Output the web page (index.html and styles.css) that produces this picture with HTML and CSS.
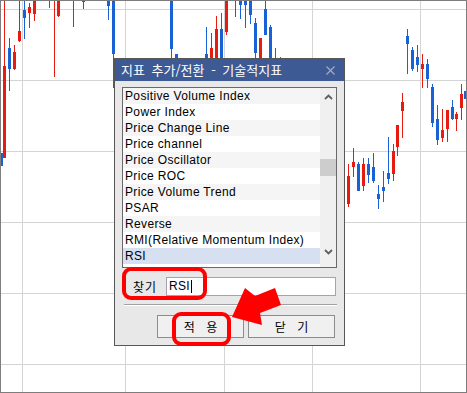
FILE: index.html
```html
<!DOCTYPE html>
<html lang="ko">
<head>
<meta charset="utf-8">
<title>지표 추가/전환</title>
<link rel="stylesheet" href="styles.css">
</head>
<body>
<div class="frame">
  <svg class="chart" width="467" height="393" viewBox="0 0 467 393">
    <g class="grid">
      <rect x="1" y="9" width="465" height="1"/>
      <rect x="1" y="80" width="465" height="1"/>
      <rect x="1" y="151" width="465" height="1"/>
      <rect x="1" y="222" width="465" height="1"/>
      <rect x="1" y="293" width="465" height="1"/>
      <rect x="1" y="364" width="465" height="1"/>
      <rect x="22" y="1" width="1" height="391"/>
      <rect x="125" y="1" width="1" height="391"/>
      <rect x="224" y="1" width="1" height="391"/>
      <rect x="312" y="1" width="1" height="391"/>
      <rect x="420" y="1" width="1" height="391"/>
    </g>
    <g class="up">
      <rect x="4" y="0" width="1" height="158"/><rect x="3" y="66" width="3" height="92"/>
      <rect x="14" y="45" width="1" height="25"/><rect x="13" y="52" width="3" height="17"/>
      <rect x="19" y="0" width="1" height="42"/><rect x="18" y="31" width="3" height="10"/>
      <rect x="29" y="3" width="1" height="25"/><rect x="28" y="7" width="3" height="6"/>
      <rect x="34" y="0" width="1" height="21"/><rect x="33" y="0" width="3" height="14"/>
      <rect x="54" y="0" width="1" height="77"/>
      <rect x="58" y="0" width="1" height="17"/><rect x="57" y="0" width="3" height="16"/>
      <rect x="73" y="0" width="1" height="27"/>
      <rect x="83" y="0" width="1" height="9"/><rect x="82" y="0" width="3" height="2"/>
      <rect x="211" y="33" width="1" height="27"/><rect x="210" y="48" width="3" height="12"/>
      <rect x="216" y="16" width="1" height="44"/><rect x="215" y="29" width="3" height="31"/>
      <rect x="226" y="0" width="1" height="35"/><rect x="225" y="0" width="3" height="32"/>
      <rect x="259" y="38" width="3" height="22"/>
      <rect x="348" y="164" width="1" height="43"/><rect x="347" y="176" width="3" height="28"/>
      <rect x="353" y="148" width="1" height="29"/><rect x="352" y="162" width="3" height="5"/>
      <rect x="363" y="158" width="1" height="33"/><rect x="362" y="164" width="3" height="22"/>
      <rect x="393" y="144" width="1" height="37"/><rect x="392" y="151" width="3" height="23"/>
      <rect x="397" y="125" width="1" height="31"/><rect x="396" y="125" width="3" height="22"/>
      <rect x="402" y="93" width="1" height="45"/><rect x="401" y="102" width="3" height="9"/>
      <rect x="422" y="54" width="1" height="34"/><rect x="421" y="64" width="3" height="5"/>
      <rect x="442" y="109" width="1" height="33"/><rect x="441" y="130" width="3" height="8"/>
      <rect x="447" y="110" width="1" height="32"/><rect x="446" y="110" width="3" height="19"/>
      <rect x="456" y="112" width="1" height="19"/><rect x="455" y="114" width="3" height="5"/>
      <rect x="461" y="84" width="1" height="36"/><rect x="460" y="94" width="3" height="14"/>
    </g>
    <g class="down">
      <rect x="1" y="153" width="2" height="13"/>
      <rect x="9" y="38" width="1" height="53"/><rect x="8" y="48" width="3" height="21"/>
      <rect x="24" y="0" width="1" height="39"/><rect x="23" y="10" width="3" height="8"/>
      <rect x="49" y="0" width="1" height="8"/>
      <rect x="108" y="0" width="1" height="20"/><rect x="107" y="0" width="3" height="6"/>
      <rect x="113" y="0" width="1" height="88"/><rect x="112" y="0" width="3" height="54"/>
      <rect x="171" y="0" width="1" height="60"/><rect x="170" y="0" width="3" height="49"/>
      <rect x="176" y="54" width="1" height="6"/><rect x="175" y="54" width="3" height="6"/>
      <rect x="206" y="27" width="1" height="33"/><rect x="205" y="54" width="3" height="6"/>
      <rect x="221" y="13" width="1" height="47"/><rect x="220" y="29" width="3" height="31"/>
      <rect x="235" y="0" width="1" height="17"/>
      <rect x="240" y="0" width="1" height="19"/><rect x="239" y="0" width="3" height="5"/>
      <rect x="245" y="0" width="1" height="28"/><rect x="244" y="0" width="3" height="5"/>
      <rect x="250" y="0" width="1" height="24"/><rect x="249" y="0" width="3" height="15"/>
      <rect x="255" y="18" width="1" height="42"/><rect x="254" y="23" width="3" height="30"/>
      <rect x="265" y="0" width="1" height="35"/><rect x="264" y="9" width="3" height="26"/>
      <rect x="270" y="25" width="1" height="35"/><rect x="269" y="27" width="3" height="33"/>
      <rect x="275" y="48" width="1" height="12"/>
      <rect x="280" y="57" width="1" height="3"/>
      <rect x="358" y="162" width="1" height="29"/><rect x="357" y="164" width="3" height="27"/>
      <rect x="368" y="158" width="1" height="25"/><rect x="367" y="164" width="3" height="11"/>
      <rect x="373" y="153" width="1" height="30"/><rect x="372" y="167" width="3" height="14"/>
      <rect x="378" y="185" width="1" height="24"/><rect x="377" y="194" width="3" height="5"/>
      <rect x="383" y="171" width="1" height="31"/><rect x="382" y="187" width="3" height="4"/>
      <rect x="388" y="137" width="1" height="47"/><rect x="387" y="173" width="3" height="6"/>
      <rect x="407" y="29" width="1" height="45"/><rect x="406" y="36" width="3" height="8"/>
      <rect x="412" y="47" width="1" height="24"/><rect x="411" y="50" width="3" height="19"/>
      <rect x="417" y="45" width="1" height="27"/><rect x="416" y="57" width="3" height="8"/>
      <rect x="427" y="59" width="1" height="29"/><rect x="426" y="64" width="3" height="15"/>
      <rect x="432" y="84" width="1" height="43"/><rect x="431" y="87" width="3" height="36"/>
      <rect x="437" y="105" width="1" height="40"/><rect x="436" y="119" width="3" height="21"/>
      <rect x="452" y="100" width="1" height="20"/><rect x="451" y="107" width="3" height="12"/>
      <rect x="464" y="91" width="2" height="8"/>
    </g>
    <rect class="border" x="0.5" y="0.5" width="466" height="392"/>
  </svg>

  <div class="dialog">
    <div class="titlebar">
      <span class="title">지표 추가/전환 - 기술적지표</span>
      <svg class="close" width="9" height="9" viewBox="0 0 9 9"><path d="M0.5 0.5L8.5 8.5M8.5 0.5L0.5 8.5"/></svg>
    </div>
    <div class="content">
      <div class="list">
        <ul class="items">
          <li>Positive Volume Index</li>
          <li>Power Index</li>
          <li>Price Change Line</li>
          <li>Price channel</li>
          <li>Price Oscillator</li>
          <li>Price ROC</li>
          <li>Price Volume Trend</li>
          <li>PSAR</li>
          <li>Reverse</li>
          <li>RMI(Relative Momentum Index)</li>
          <li class="sel">RSI</li>
          <li class="empty"></li>
        </ul>
        <div class="scroll">
          <div class="arrow"><svg width="9" height="6" viewBox="0 0 9 6"><path d="M1 5L4.5 1.5L8 5"/></svg></div>
          <div class="track"><div class="thumb"></div></div>
          <div class="arrow"><svg width="9" height="6" viewBox="0 0 9 6"><path d="M1 1L4.5 4.5L8 1"/></svg></div>
        </div>
      </div>
      <div class="search">
        <span class="label">찾기</span>
        <div class="input">RSI<span class="caret"></span></div>
      </div>
      <div class="sep"></div>
      <div class="buttons">
        <button class="btn">적 용</button>
        <button class="btn">닫 기</button>
      </div>
    </div>
  </div>

  <svg class="marks" width="467" height="393" viewBox="0 0 467 393">
    <rect x="124" y="269" width="81" height="29" rx="7"/>
    <rect x="174" y="314" width="55" height="30" rx="7"/>
    <polygon points="232,317 245,288 255,296 275,288 281,305 260,313 262,325"/>
  </svg>
</div>
</body>
</html>
```

FILE: styles.css
```css
* { box-sizing: border-box; }
html, body { margin: 0; padding: 0; background: #fff; }

.frame { position: relative; width: 467px; height: 393px; overflow: hidden; }
.chart { display: block; }
.grid rect { fill: #d4d4d4; }
.up rect { fill: #e81b10; }
.down rect { fill: #1862d6; }
.border { fill: none; stroke: #7d7d7d; stroke-width: 1; }

.dialog {
  position: absolute; left: 114px; top: 58px;
  width: 231px; height: 288px;
  border: 1px solid #575757;
  background: #e8e8e8;
  display: flex; flex-direction: column;
  font-family: "Liberation Sans", "Noto Sans CJK KR", sans-serif;
  font-size: 12px; color: #000;
}
.titlebar {
  height: 22px; flex: none;
  background: #3d5a95; color: #fff;
  display: flex; align-items: center; justify-content: space-between;
  padding: 0 9px 0 6px;
  font-family: "Noto Sans CJK KR", sans-serif; font-size: 13px;
  word-spacing: 3px;
}
.title { line-height: 22px; }
.close path { stroke: #a3abc4; stroke-width: 1.2; fill: none; }

.content { padding: 6px 7px 7px 7px; display: flex; flex-direction: column; }
.list { height: 181px; border: 1px solid #696969; background: #fff; display: flex; overflow: hidden; }
.items { flex: 1; margin: 0; padding: 0; list-style: none; overflow: hidden; }
.items li { height: 16px; line-height: 17px; padding-left: 2px; white-space: nowrap; letter-spacing: 0.35px; }
.items li:nth-child(odd) { background: #f5f5f5; }
.items li.sel { background: #d6e0f0; }

.scroll { width: 16px; flex: none; background: #f0f0f0; display: flex; flex-direction: column; }
.arrow { height: 17px; display: flex; align-items: center; justify-content: center; }
.arrow:last-child { margin-bottom: 7px; }
.arrow path { stroke: #606060; stroke-width: 1.8; fill: none; }
.track { flex: 1; padding-top: 54px; }
.thumb { height: 17px; background: #cdcdcd; }

.search { display: flex; align-items: center; margin-top: 9px; height: 19px; }
.label { width: 44px; padding-left: 11px; font-family: "Noto Sans CJK KR", sans-serif; font-size: 12px; letter-spacing: 1px; }
.input {
  width: 170px; height: 19px; background: #fff; border: 1px solid #a5a5a5;
  padding-left: 2px; line-height: 17px; display: flex; align-items: center;
  letter-spacing: 0.3px;
}
.caret { display: inline-block; width: 1px; height: 13px; background: #000; margin-left: 1px; }

.sep { margin: 8px 0 0 2px; height: 2px; border-top: 1px solid #a0a0a0; border-bottom: 1px solid #fff; }

.buttons { display: flex; justify-content: flex-end; gap: 4px; margin-top: 9px; padding-right: 2px; }
.btn {
  width: 87px; height: 23px; margin: 0; padding: 0;
  background: #f0f0f0; border: 1px solid #8c8c8c; border-radius: 0;
  font-family: "Noto Sans CJK KR", sans-serif; font-size: 12px; color: #000;
  word-spacing: 8px;
}

.marks { position: absolute; left: 0; top: 0; pointer-events: none; }
.marks rect { fill: none; stroke: #ff0000; stroke-width: 4; }
.marks polygon { fill: #ff0000; }
```
